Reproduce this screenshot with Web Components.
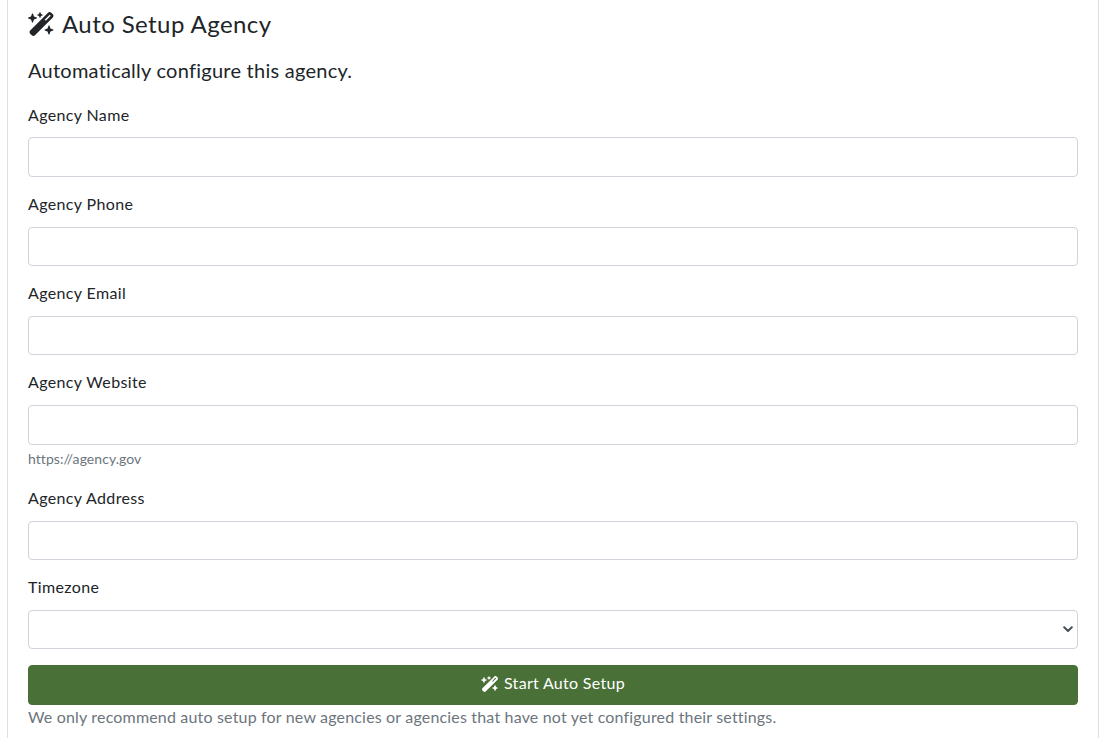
<!DOCTYPE html>
<html lang="en">
<head>
<meta charset="utf-8">
<title>Auto Setup Agency</title>
<style>
  html, body { margin: 0; padding: 0; background: #fff; overflow: hidden; }
  body {
    font-family: "Lato", "Liberation Sans", sans-serif;
    font-size: 16px;
    line-height: 1.6;
    color: #212529;
  }
</style>
</head>
<body>

<auto-setup-card heading="Auto Setup Agency" lead="Automatically configure this agency.">
  <form-field label="Agency Name"></form-field>
  <form-field label="Agency Phone"></form-field>
  <form-field label="Agency Email"></form-field>
  <form-field label="Agency Website" help="https://agency.gov"></form-field>
  <form-field label="Agency Address"></form-field>
  <form-field label="Timezone" type="select"></form-field>
  <start-button>Start Auto Setup</start-button>
  <span slot="note">We only recommend auto setup for new agencies or agencies that have not yet configured their settings.</span>
</auto-setup-card>

<script>
const WAND = `M234.7 42.7L197 56.8c-3 1.1-5 4-5 7.2s2 6.1 5 7.2l37.7 14.1L248.8 123c1.1 3 4 5 7.2 5s6.1-2 7.2-5l14.1-37.7L315 71.2c3-1.1 5-4 5-7.2s-2-6.1-5-7.2L277.3 42.7 263.2 5c-1.1-3-4-5-7.2-5s-6.1 2-7.2 5L234.7 42.7zM46.1 395.4c-18.7 18.7-18.7 49.1 0 67.9l34.6 34.6c18.7 18.7 49.1 18.7 67.9 0L529.9 116.5c18.7-18.7 18.7-49.1 0-67.9L495.3 14.1c-18.7-18.7-49.1-18.7-67.9 0L46.1 395.4zM484.6 82.6l-105 105-23.3-23.3 105-105 23.3 23.3zM7.5 117.2C3 118.9 0 123.2 0 128s3 9.1 7.5 10.8L64 160l21.2 56.5c1.7 4.5 6 7.5 10.8 7.5s9.1-3 10.8-7.5L128 160l56.5-21.2c4.5-1.7 7.5-6 7.5-10.8s-3-9.1-7.5-10.8L128 96 106.8 39.5C105.1 35 100.8 32 96 32s-9.1 3-10.8 7.5L64 96 7.5 117.2zm352 256c-4.5 1.7-7.5 6-7.5 10.8s3 9.1 7.5 10.8L416 416l21.2 56.5c1.7 4.5 6 7.5 10.8 7.5s9.1-3 10.8-7.5L480 416l56.5-21.2c4.5-1.7 7.5-6 7.5-10.8s-3-9.1-7.5-10.8L480 352l-21.2-56.5c-1.7-4.5-6-7.5-10.8-7.5s-9.1 3-10.8 7.5L416 352l-56.5 21.2z`;

class AutoSetupCard extends HTMLElement {
  connectedCallback() {
    this.attachShadow({ mode: 'open' });
    this.shadowRoot.innerHTML = `
      <style>
        :host {
          display: block;
          margin: 0 10px 0 7px;
          border-left: 1px solid #dfdfdf;
          border-right: 1px solid #dfdfdf;
          padding: 6px 20px 0;
          height: 732px;
        }
        h4 {
          margin: 0 0 12px;
          font-size: 24px;
          font-weight: 400;
          line-height: 36px;
          letter-spacing: 0.42px;
          display: flex;
          align-items: center;
          gap: 7px;
        }
        svg { width: 27px; height: 24px; fill: currentColor; flex: none; }
        .lead { margin: 0 0 17.8px; font-size: 20px; line-height: 32px; letter-spacing: 0.25px; }
        .note { margin-top: -0.8px; color: #6c757d; letter-spacing: 0.175px; }
      </style>
      <h4><svg viewBox="0 0 576 512"><path d="${WAND}"/></svg>${this.getAttribute('heading')}</h4>
      <p class="lead">${this.getAttribute('lead')}</p>
      <slot></slot>
      <div class="note"><slot name="note"></slot></div>
    `;
  }
}

class FormField extends HTMLElement {
  connectedCallback() {
    const help = this.getAttribute('help');
    const control = this.getAttribute('type') === 'select'
      ? '<select><option></option></select>'
      : '<input type="text">';
    this.attachShadow({ mode: 'open' });
    this.shadowRoot.innerHTML = `
      <style>
        :host { display: block; margin-bottom: 16px; }
        label { display: block; margin: -2px 0 10px; letter-spacing: 0.36px; }
        input, select {
          display: block;
          box-sizing: border-box;
          width: 100%;
          height: 39.6px;
          padding: 6px 12px;
          font: inherit;
          color: #212529;
          background-color: #fff;
          border: 1px solid #ced4da;
          border-radius: 4px;
          margin: 0;
          outline: none;
        }
        select {
          appearance: none;
          background-image: url("data:image/svg+xml,%3csvg xmlns='http://www.w3.org/2000/svg' viewBox='0 0 10 7'%3e%3cpath fill='none' stroke='%23495057' stroke-linecap='round' stroke-linejoin='round' stroke-width='2' d='m1.2 1.2 3.8 3.8 3.8-3.8'/%3e%3c/svg%3e");
          background-repeat: no-repeat;
          background-position: right 4px center;
          background-size: 10px 7px;
        }
        .help { margin-top: 3px; padding-bottom: 1px; font-size: 14px; line-height: 22.4px; color: #6c757d; letter-spacing: 0.06px; }
      </style>
      <label>${this.getAttribute('label')}</label>
      ${control}
      ${help ? `<div class="help">${help}</div>` : ''}
    `;
  }
}

class StartButton extends HTMLElement {
  connectedCallback() {
    this.attachShadow({ mode: 'open' });
    this.shadowRoot.innerHTML = `
      <style>
        :host { display: block; }
        button {
          display: flex;
          align-items: center;
          justify-content: center;
          gap: 5px;
          box-sizing: border-box;
          width: 100%;
          height: 39.6px;
          padding: 4px 12px 7px;
          font: inherit;
          letter-spacing: 0.3px;
          color: #fff;
          background-color: #487037;
          border: 1px solid #487037;
          border-radius: 4px;
        }
        svg { width: 18px; height: 16px; fill: currentColor; flex: none; }
        span { margin-bottom: 2px; }
      </style>
      <button type="button"><svg viewBox="0 0 576 512"><path d="${WAND}"/></svg><span><slot></slot></span></button>
    `;
  }
}

customElements.define('auto-setup-card', AutoSetupCard);
customElements.define('form-field', FormField);
customElements.define('start-button', StartButton);
</script>
</body>
</html>
